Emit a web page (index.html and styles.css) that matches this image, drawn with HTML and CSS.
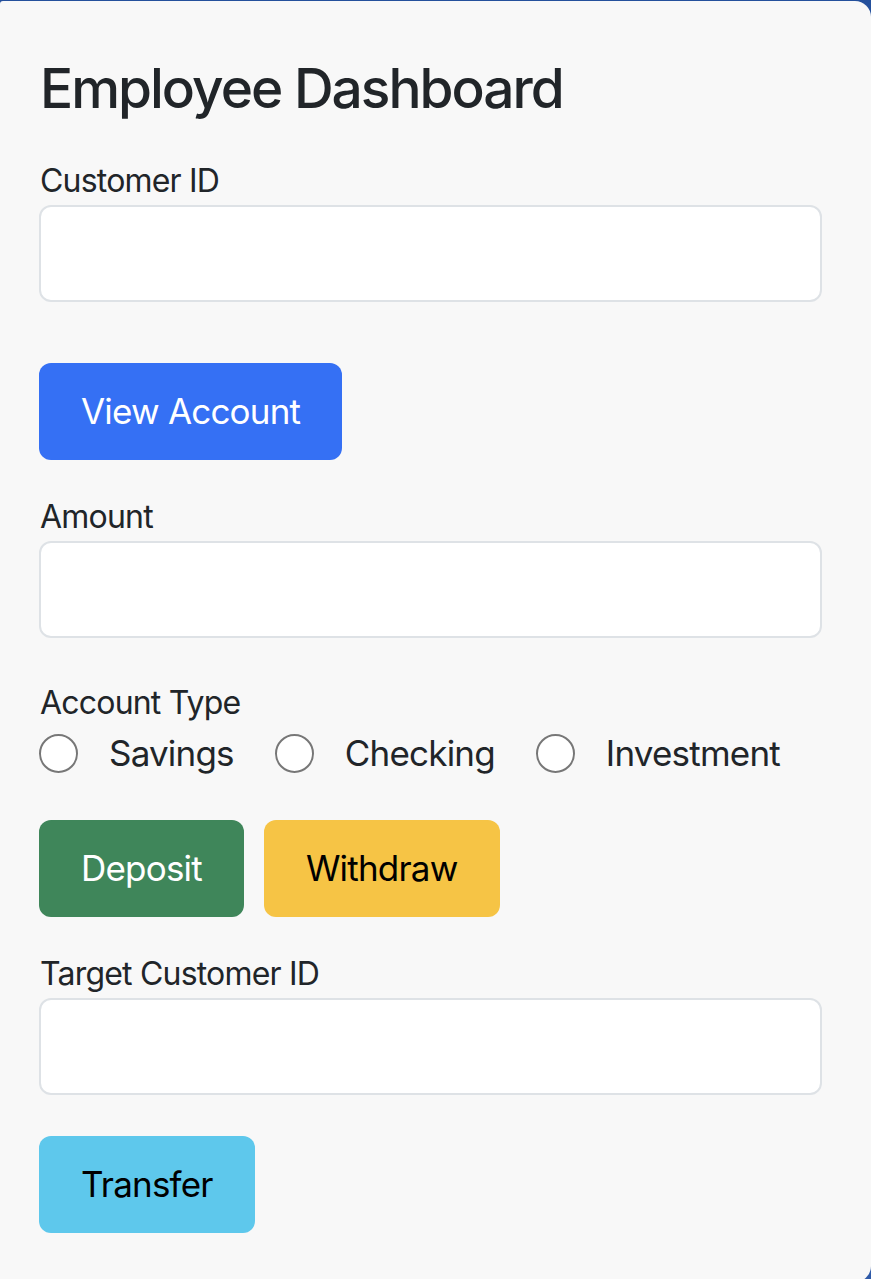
FILE: index.html
```html
<!DOCTYPE html>
<html lang="en">
<head>
<meta charset="utf-8">
<title>Employee Dashboard</title>
<link rel="stylesheet" href="styles.css">
</head>
<body>
<main class="card">
  <h2 class="title">Employee Dashboard</h2>

  <label class="form-label" for="customerId">Customer ID</label>
  <input class="form-control" id="customerId" type="text">

  <div class="actions actions-view">
    <button class="btn btn-primary" type="button">View Account</button>
  </div>

  <label class="form-label label-amount" for="amount">Amount</label>
  <input class="form-control" id="amount" type="text">

  <label class="form-label label-type">Account Type</label>
  <div class="radio-row">
    <label class="radio-item"><input class="radio" type="radio" name="type"><span>Savings</span></label>
    <label class="radio-item"><input class="radio" type="radio" name="type"><span>Checking</span></label>
    <label class="radio-item"><input class="radio" type="radio" name="type"><span>Investment</span></label>
  </div>

  <div class="actions actions-money">
    <button class="btn btn-success" type="button">Deposit</button>
    <button class="btn btn-warning" type="button">Withdraw</button>
  </div>

  <label class="form-label label-target" for="targetId">Target Customer ID</label>
  <input class="form-control" id="targetId" type="text">

  <div class="actions actions-transfer">
    <button class="btn btn-info" type="button">Transfer</button>
  </div>
</main>
</body>
</html>
```

FILE: styles.css
```css
* {
  box-sizing: border-box;
}

html, body {
  margin: 0;
  padding: 0;
}

body {
  padding-top: 1px;
  background: linear-gradient(180deg, #24509c 0%, #2f5aa8 100%);
  font-family: "Inter", "Liberation Sans", sans-serif;
  color: #212529;
  overflow: hidden;
  height: 1279px;
}

.card {
  display: flex;
  flex-direction: column;
  align-items: stretch;
  height: 1281px;
  background: #f8f8f8;
  border-radius: 3px 16px 16px 0;
  padding: 54px 49px 49px 39px;
}

.title {
  margin: 0 0 40px 1px;
  font-size: 55px;
  font-weight: 500;
  line-height: 66px;
  letter-spacing: -2px;
  color: #212529;
}

.form-label {
  display: block;
  font-size: 32px;
  line-height: 40px;
  letter-spacing: -0.8px;
  margin: 0 0 4px 1px;
}

.label-amount {
  margin-top: 37px;
}

.label-type {
  margin-top: 45px;
  margin-bottom: 11px;
}

.label-target {
  margin-top: 37px;
}

.form-control {
  display: block;
  width: 100%;
  height: 97px;
  margin: 0;
  background: #fff;
  border: 2px solid #dee2e6;
  border-radius: 12px;
  font-family: inherit;
  font-size: 32px;
  padding: 0 24px;
  outline: none;
}

.actions {
  display: flex;
  gap: 20px;
}

.actions-view {
  margin-top: 61px;
}

.actions-money {
  margin-top: 47px;
}

.actions-transfer {
  margin-top: 41px;
}

.btn {
  height: 97px;
  padding: 0 42px;
  border: none;
  border-radius: 12px;
  font-family: inherit;
  font-size: 35px;
  font-weight: 400;
  line-height: 1;
  letter-spacing: -0.8px;
  cursor: pointer;
}

.btn-primary {
  background: #3570f4;
  color: #fff;
}

.btn-success {
  background: #3f865a;
  color: #fff;
}

.btn-warning {
  background: #f6c445;
  color: #000;
}

.btn-info {
  background: #5ec8ec;
  color: #000;
}

.radio-row {
  display: flex;
  align-items: center;
  height: 39px;
}

.radio-item {
  display: flex;
  align-items: center;
  gap: 31px;
  font-size: 35px;
  line-height: 39px;
  letter-spacing: -0.8px;
  margin-right: 41px;
}

.radio {
  appearance: none;
  -webkit-appearance: none;
  width: 39px;
  height: 39px;
  margin: 0;
  border: 2px solid #777;
  border-radius: 50%;
  background: #fff;
  flex: none;
}
```
